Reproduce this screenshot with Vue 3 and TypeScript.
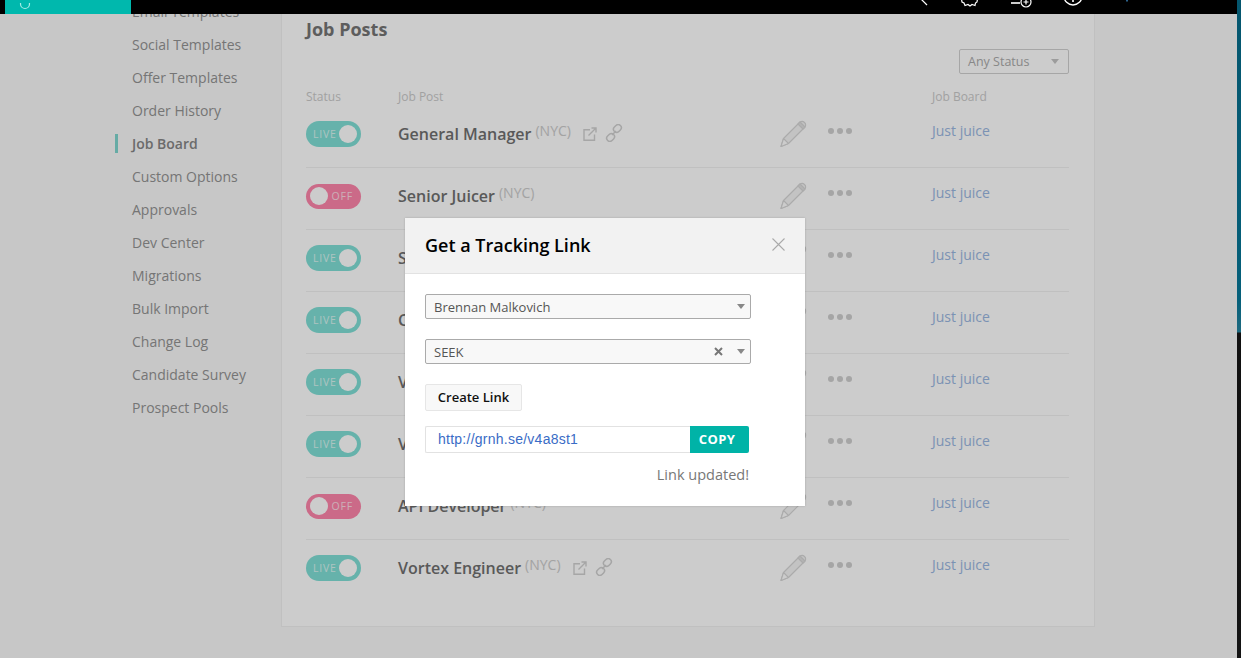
<template>
  <div class="screen">
    <div class="window">
      <header class="topbar">
        <div class="logo">
          <svg width="126" height="14" viewBox="0 0 126 14">
            <circle cx="20" cy="1" r="4.5" fill="none" stroke="#a5ece6" stroke-width="1.2" />
          </svg>
        </div>
        <svg class="top-icons" width="240" height="14" viewBox="0 0 240 14" fill="none" stroke="#fff" stroke-width="1.2">
          <path d="M21 -1 L27 5" />
          <path d="M61.5 -1 L62 2 L64 3 L65 5.5 L68 4.5 L70 6 L72 4.5 L75 5.5 L75.5 3 L77 2 L77.5 -1" />
          <path d="M111 3 H120" stroke-width="1.6" />
          <circle cx="126" cy="2" r="5" />
          <path d="M123.5 2 H128.5 M126 -0.5 V4.5" />
          <circle cx="173" cy="-4" r="9" stroke-width="1.4" />
          <path d="M173 -1 V2" stroke-width="1.6" />
          <path d="M227 0 V1.5" stroke="#4aa3e8" />
        </svg>
      </header>

      <div class="page">
        <nav class="sidebar">
          <a v-for="item in navItems" :key="item" class="nav-item" :class="{ active: item === 'Job Board' }">{{ item }}</a>
        </nav>

        <main class="panel">
          <h1>Job Posts</h1>
          <div class="filter-row">
            <div class="filter">Any Status<span class="caret"></span></div>
          </div>

          <div class="grid head">
            <span>Status</span>
            <span>Job Post</span>
            <span></span>
            <span>Job Board</span>
          </div>

          <div v-for="post in posts" :key="post.name" class="grid row">
            <div class="toggle" :class="post.live ? 'live' : 'off'">
              <span class="toggle-label">{{ post.live ? 'LIVE' : 'OFF' }}</span>
              <span class="knob"></span>
            </div>
            <div class="title">
              <span class="name">{{ post.name }}</span>
              <span class="loc">(NYC)</span>
              <template v-if="post.live">
                <svg class="ext" width="14" height="14" viewBox="0 0 14 14" fill="none" stroke="#d0d0d0" stroke-width="1.4">
                  <path d="M7 2.7 H1 V13.3 H11.5 V7.5" />
                  <path d="M5.5 8.5 L13 1 M8.5 1 H13 V5.5" />
                </svg>
                <svg class="chain" width="18" height="18" viewBox="0 0 18 18" fill="none" stroke="#d0d0d0" stroke-width="1.5">
                  <rect x="8.2" y="1.4" width="8.4" height="6.2" rx="3.1" transform="rotate(-45 12.4 4.5)" />
                  <rect x="1.4" y="10.4" width="8.4" height="6.2" rx="3.1" transform="rotate(-45 5.6 13.5)" />
                  <path d="M7 11 L11 7" />
                </svg>
              </template>
            </div>
            <div class="actions">
              <svg class="pencil" width="28" height="28" viewBox="0 0 28 28" fill="#f4f4f4" stroke="#d6d6d6" stroke-width="1.1" stroke-linejoin="round">
                <path d="M2 26.5 L4.5 18.5 L21 2 Q23.5 0.5 25.5 2.5 Q27.5 4.5 26 7 L9.5 23.5 Z" />
                <path d="M21 2 L26 7 L24 9 L19 4 Z" fill="#e2e2e2" />
                <path d="M4.5 18.5 L9.5 23.5 L2 26.5 Z" fill="#ffffff" />
              </svg>
              <span class="dots"><i></i><i></i><i></i></span>
            </div>
            <a class="board">Just juice</a>
          </div>
        </main>
      </div>

      <div class="overlay"></div>

      <section class="modal">
        <div class="modal-head">
          <h2>Get a Tracking Link</h2>
          <svg width="13" height="13" viewBox="0 0 13 13" stroke="#aaa" stroke-width="1.1">
            <path d="M0.5 0.5 L12.5 12.5 M12.5 0.5 L0.5 12.5" />
          </svg>
        </div>
        <div class="modal-body">
          <div class="select">
            <span>Brennan Malkovich</span>
            <span class="caret"></span>
          </div>
          <div class="select">
            <span>SEEK</span>
            <svg class="clear" width="9" height="9" viewBox="0 0 9 9" stroke="#777" stroke-width="2">
              <path d="M1 1 L8 8 M8 1 L1 8" />
            </svg>
            <span class="caret"></span>
          </div>
          <button class="create" type="button">Create Link</button>
          <div class="link-row">
            <div class="url">http://grnh.se/v4a8st1</div>
            <button class="copy" type="button">COPY</button>
          </div>
          <p class="status">Link updated!</p>
        </div>
      </section>
    </div>
    <div class="wallpaper"></div>
  </div>
</template>

<script setup lang="ts">
const navItems = [
  'Email Templates',
  'Social Templates',
  'Offer Templates',
  'Order History',
  'Job Board',
  'Custom Options',
  'Approvals',
  'Dev Center',
  'Migrations',
  'Bulk Import',
  'Change Log',
  'Candidate Survey',
  'Prospect Pools'
]

const posts = [
  { name: 'General Manager', live: true },
  { name: 'Senior Juicer', live: false },
  { name: 'Sales Lead', live: true },
  { name: 'Chief Taster', live: true },
  { name: 'VP of Sales', live: true },
  { name: 'VP of Design', live: true },
  { name: 'API Developer', live: false },
  { name: 'Vortex Engineer', live: true }
]
</script>

<style>
html,
body {
  margin: 0;
  overflow: hidden;
}
</style>

<style scoped>
.screen {
  display: flex;
  width: 1241px;
  height: 658px;
  overflow: hidden;
  font-family: "Open Sans", "Liberation Sans", sans-serif;
}

.window {
  position: relative;
  width: 1237px;
  height: 658px;
  overflow: hidden;
  background: #f9f9f9;
}

.wallpaper {
  width: 4px;
  background: linear-gradient(#04566e 0, #06607a 300px, #1f6a80 332px, #111 333px, #141414 100%);
}

.topbar {
  position: absolute;
  top: 0;
  left: 0;
  right: 0;
  z-index: 3;
  display: flex;
  height: 14px;
  padding-left: 5px;
  background: #000;
}

.logo {
  width: 126px;
  height: 14px;
  background: #00b8ad;
}

.top-icons {
  margin-left: 769px;
}

.page {
  display: flex;
  height: 658px;
}

.sidebar {
  box-sizing: border-box;
  display: flex;
  flex-direction: column;
  width: 281px;
  padding: 0 0 0 132px;
  margin-top: -5px;
}

.nav-item {
  position: relative;
  height: 33px;
  line-height: 33px;
  font-size: 14px;
  color: #939393;
  white-space: nowrap;
}

.nav-item.active {
  font-weight: 600;
  color: #868686;
}

.nav-item.active::before {
  content: "";
  position: absolute;
  left: -17px;
  top: 7px;
  width: 3px;
  height: 19px;
  background: #80d6cf;
}

.panel {
  box-sizing: border-box;
  width: 814px;
  height: 627px;
  padding: 16px 25px 0 24px;
  background: #fff;
  border-left: 1px solid #f0f0f0;
  border-right: 1px solid #f0f0f0;
  border-bottom: 1px solid #f0f0f0;
}

h1 {
  margin: 0;
  height: 26px;
  line-height: 26px;
  font-size: 18px;
  font-weight: 700;
  color: #757575;
}

.filter-row {
  display: flex;
  justify-content: flex-end;
  margin-top: 7px;
}

.filter {
  box-sizing: border-box;
  display: flex;
  align-items: center;
  justify-content: space-between;
  width: 110px;
  height: 25px;
  padding: 0 9px 0 8px;
  background: #fff;
  border: 1px solid #d0d0d0;
  border-radius: 2px;
  font-size: 12.5px;
  color: #aaa;
}

.caret {
  width: 0;
  height: 0;
  border-left: 4.5px solid transparent;
  border-right: 4.5px solid transparent;
  border-top: 5px solid #c4c4c4;
}

.grid {
  display: grid;
  grid-template-columns: 92px 382px 152px 1fr;
  align-items: center;
}

.head {
  height: 18px;
  margin-top: 14px;
  padding-bottom: 2px;
  box-sizing: border-box;
  font-size: 12px;
  color: #cacaca;
}

.row {
  box-sizing: border-box;
  height: 62px;
  padding-bottom: 5px;
  border-bottom: 1px solid #f0f0f0;
}

.row:last-child {
  border-bottom-color: transparent;
}

.toggle {
  box-sizing: border-box;
  display: flex;
  align-items: center;
  justify-content: space-between;
  width: 55px;
  height: 26px;
  padding: 0 4px 0 7px;
  border-radius: 13px;
  background: #80dfd6;
}

.toggle.off {
  flex-direction: row-reverse;
  height: 25px;
  padding: 0 8px 0 4px;
  background: #fe85aa;
}

.toggle-label {
  font-size: 10.5px;
  letter-spacing: 0.8px;
  color: #fff;
  opacity: 0.7;
}

.knob {
  width: 18px;
  height: 18px;
  border-radius: 50%;
  background: #fff;
}

.title {
  display: flex;
  align-items: center;
  white-space: nowrap;
}

.name {
  font-size: 16px;
  font-weight: 600;
  color: #707070;
}

.loc {
  position: relative;
  top: -4px;
  margin-left: 4px;
  font-size: 14px;
  color: #cccccc;
}

.ext {
  margin-left: 12px;
}

.chain {
  margin-left: 8px;
  position: relative;
  top: -1px;
}

.actions {
  display: flex;
  align-items: center;
  gap: 21px;
}

.pencil {
  margin: -1px 0 0 -1px;
}

.dots {
  display: flex;
  gap: 3px;
  margin-top: -7px;
}

.dots i {
  width: 6px;
  height: 6px;
  border-radius: 50%;
  background: #cfcfcf;
}

.board {
  margin-top: -7px;
  font-size: 14px;
  color: #9ab7e2;
}

.overlay {
  position: absolute;
  inset: 0;
  z-index: 1;
  background: rgba(0, 0, 0, 0.2);
}

.modal {
  position: absolute;
  left: 405px;
  top: 218px;
  z-index: 2;
  width: 400px;
  height: 288px;
  background: #fff;
  box-shadow: 0 0 2px rgba(0, 0, 0, 0.2);
}

.modal-head {
  box-sizing: border-box;
  display: flex;
  align-items: center;
  justify-content: space-between;
  height: 56px;
  padding: 0 20px 2px 20px;
  background: #f2f2f2;
  border-bottom: 1px solid #e2e2e2;
}

h2 {
  margin: 0;
  font-size: 18px;
  font-weight: 600;
  color: #000;
}

.modal-body {
  display: flex;
  flex-direction: column;
  align-items: flex-start;
  padding: 20px 56px 0 20px;
}

.select {
  box-sizing: border-box;
  display: flex;
  align-items: center;
  width: 326px;
  height: 25px;
  margin-bottom: 20px;
  padding: 0 5px 0 8px;
  background: #f8f8f8;
  border: 1px solid #aaa;
  border-radius: 2px;
  font-size: 13px;
  color: #555;
}

.select span:first-child {
  flex: 1;
}

.select .caret {
  border-top-color: #888;
}

.clear {
  margin-right: 14px;
}

.create {
  box-sizing: border-box;
  width: 97px;
  height: 27px;
  padding: 0 0 2px;
  background: #f8f8f8;
  border: 1px solid #e6e6e6;
  border-radius: 2px;
  font-family: inherit;
  font-size: 13px;
  font-weight: 600;
  color: #111;
}

.link-row {
  display: flex;
  width: 324px;
  height: 27px;
  margin-top: 15px;
}

.url {
  box-sizing: border-box;
  flex: 1;
  padding-left: 12px;
  line-height: 25px;
  border: 1px solid #e2e2e2;
  border-right: 0;
  border-radius: 2px 0 0 2px;
  font-family: "Liberation Sans", Arial, sans-serif;
  font-size: 14px;
  letter-spacing: 0.25px;
  color: #3a6cc6;
}

.copy {
  width: 59px;
  padding: 0 5px 2px 0;
  background: #00b3a7;
  border: 0;
  border-radius: 0 2px 2px 0;
  font-family: inherit;
  font-size: 13px;
  font-weight: 700;
  letter-spacing: 0.4px;
  color: #fff;
}

.status {
  width: 324px;
  margin: 12px 0 0;
  line-height: 20px;
  text-align: right;
  font-size: 14.5px;
  color: #777;
}
</style>
